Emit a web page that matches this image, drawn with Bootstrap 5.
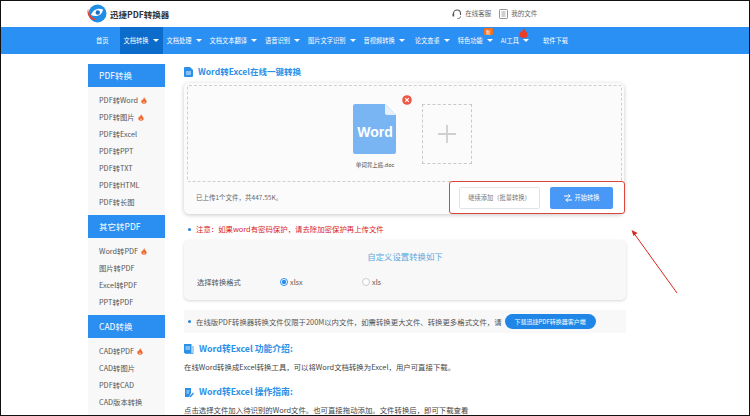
<!DOCTYPE html>
<html lang="zh-CN">
<head>
<meta charset="utf-8">
<title>Word转Excel</title>
<link href="https://cdn.jsdelivr.net/npm/bootstrap@5.3.0/dist/css/bootstrap.min.css" rel="stylesheet">
<style>
html,body{margin:0;background:#fff;overflow:hidden}
body{font-family:"Noto Sans CJK SC","Noto Sans",sans-serif;color:#444}
.frame{width:750px;height:416px;border:1px solid #111;overflow:hidden;position:relative;background:#fff}
.tophead{height:26px;padding-left:86px}
.brand{font-size:8.5px;font-weight:700;color:#333;margin-left:3px;line-height:1}
.tools{margin-left:283px;font-size:6.5px;color:#666}
.tools span{margin-left:3px}
.tools svg{display:block}
.tool-b{margin-left:8px}
.bluebar{height:27px;background:#2b90f3;padding-left:91px;color:#fff;font-size:6.25px}
.navi{height:27px;padding:0 4px;white-space:nowrap;position:relative}
.navi.on{background:#0b6ccb;margin-left:7px}
.navi.wide{padding-right:6px}
.navi.last{margin-left:6px}
.caret-w{width:0;height:0;border-left:3.2px solid transparent;border-right:3.2px solid transparent;border-top:3.6px solid #fff;margin-left:4px}
.badge-new{position:absolute;left:30px;top:1px;width:9px;height:7px;background:#f2701f;font-size:5px;line-height:7px;text-align:center;border-radius:1px}
.flame-top{position:absolute;left:22px;top:1px}
.pagewrap{padding:10px 0 0 87px}
.sidebox{width:77px;flex:none}
.sidehead{height:23px;background:#2b8ff2;color:#fff;font-size:8.5px;padding-left:11px}
.sidelist{background:#f8f8f8;padding:4.5px 0 4.5px 11px;font-size:7.3px;color:#555}
.sideitem{height:17px}
.sideitem svg{margin-left:3px}
.mainbox{width:442px;margin-left:19px}
.headline{height:19px;color:#2b90e8;font-size:8.5px;font-weight:700;padding-bottom:4px}
.headline svg{margin-right:5px;flex:none}
.upcard{width:440px;height:131px;background:#fbfbfb;border-radius:5px;box-shadow:0 1px 4px rgba(0,0,0,.22);padding:2px 2px 0 3px;position:relative}
.dropzone{height:97px;border:1px dashed #cfcfcf;border-radius:2px;padding-top:18px;padding-left:165px}
.docwrap{width:44px;position:relative}
.delmark{left:49px;top:-9px}
.fname{font-size:5.5px;color:#444;text-align:center;white-space:nowrap;margin-top:7px;margin-left:-10px;width:64px}
.addbox{width:50px;height:60px;border:1px dashed #c9c9c9;margin-left:25px}
.upfoot{height:32px;padding-left:9px;font-size:6.5px;color:#666}
.redbox{width:176px;height:33px;border:1px solid #d9473c;border-radius:3px;background:#fff;margin-left:auto;margin-right:-3px;padding:0 11px 0 9px;margin-top:-1px}
.btn-add,.btn-go{height:22px;border-radius:2px;font-size:6.25px;padding:0}
.btn-add{width:81px;background:#fff;border:1px solid #e3e3e3;color:#777}
.btn-go{width:63px;background:#4a98f5;border:0;color:#fff;margin-left:auto}
.btn-go svg{margin-right:3px}
.noteline{height:26px;font-size:7.4px;color:#d8222b;padding-left:4px;margin-top:2px}
.dotmark{width:3px;height:3px;border-radius:50%;background:#1d86e0;margin-right:5px;flex:none}
.setcard{width:442px;height:60px;background:#f8f8f8;border-radius:5px;box-shadow:0 1px 3px rgba(0,0,0,.16);margin-top:-2px}
.settitle{color:#5aa8dc;font-size:8.4px;text-align:center;padding-top:9px;height:28px;line-height:14px}
.setrow{height:28px;font-size:7.3px;color:#555;padding-left:13px}
.setlabel{width:83px}
.radio-mark{width:8px;height:8px;border-radius:50%;border:1px solid #ccc;background:#fff;margin-right:2px;flex:none}
.radio-mark.sel{border-color:#2b8ff2;background:radial-gradient(circle,#2b8ff2 0 2px,#fff 2.3px)}
.radio-w{width:82px}
.stripbar{height:23px;width:442px;background:#f8f8f8;margin-top:10px;font-size:7.4px;color:#555;padding-left:4px;white-space:nowrap}
.pillbtn{width:91px;height:15px;background:#1f86e8;color:#fff;border-radius:8px;font-size:6px;border:0;padding:0;margin-left:3px;white-space:nowrap}
.subhead{height:16px;color:#2b90e8;font-size:8.8px;font-weight:700;white-space:nowrap}
.subhead svg{margin-right:5px;flex:none}
.paraline{font-size:7.4px;color:#444;white-space:nowrap;line-height:12px}
.s1{margin-top:8px}.p1{margin-top:4px}.s2{margin-top:11px}.p2{margin-top:4px}
.arrowover{position:absolute;left:620px;top:220px}
</style>
</head>
<body>
<div class="frame">
  <header class="tophead d-flex align-items-center">
    <svg width="20" height="20" viewBox="0 0 20 20"><circle cx="10.500" cy="9.500" r="9" fill="#1f8fe6"/><path d="M4 11C6 5.500 11 3.500 16 5.500C15.500 10.500 10 14 4 11Z" fill="#fff"/><circle cx="10.800" cy="8.500" r="2.200" fill="#1f6fc4"/><path d="M1.200 4.500C1 9.500 4 13 9.500 15.500C7 17 2.500 15 1 11C.3 9 .4 6.500 1.200 4.500Z" fill="#e8402f"/></svg>
    <span class="brand">迅捷PDF转换器</span>
    <div class="tools d-flex align-items-center">
      <svg width="10" height="11" viewBox="0 0 10 11"><path d="M1.500 6V4.500A3.500 3.500 0 0 1 8.500 4.500V6" fill="none" stroke="#555" stroke-width="1.100"/><rect x=".5" y="4.500" width="1.700" height="3" rx=".6" fill="#555"/><path d="M8.500 7.500C8.500 9 7 9.500 5.500 9.500" fill="none" stroke="#555" stroke-width=".9"/></svg>
      <span>在线客服</span>
      <svg class="tool-b" width="9" height="10" viewBox="0 0 9 10"><rect x=".5" y=".5" width="8" height="9" rx="1" fill="none" stroke="#777" stroke-width=".8"/><path d="M2.500 3H6.500M2.500 5H6.500M2.500 7H6.500" stroke="#777" stroke-width=".7"/></svg>
      <span>我的文件</span>
    </div>
  </header>
  <nav class="bluebar d-flex align-items-center">
    <div class="navi d-flex align-items-center">首页</div>
    <div class="navi on d-flex align-items-center"><span>文档转换</span><i class="caret-w"></i></div>
    <div class="navi d-flex align-items-center"><span>文档处理</span><i class="caret-w"></i></div>
    <div class="navi d-flex align-items-center"><span>文档文本翻译</span><i class="caret-w"></i></div>
    <div class="navi d-flex align-items-center"><span>语音识别</span><i class="caret-w"></i></div>
    <div class="navi d-flex align-items-center"><span>图片文字识别</span><i class="caret-w"></i></div>
    <div class="navi wide d-flex align-items-center"><span>音视频转换</span><i class="caret-w"></i></div>
    <div class="navi d-flex align-items-center"><span>论文查重</span><i class="caret-w"></i></div>
    <div class="navi d-flex align-items-center"><span>特色功能</span><i class="caret-w"></i><b class="badge-new fw-normal">新</b></div>
    <div class="navi d-flex align-items-center"><span>AI工具</span><i class="caret-w"></i>
      <svg class="flame-top" width="9" height="10" viewBox="0 0 9 10"><path d="M5 0C5.300 2.500 8.500 3.800 8.500 7C8.500 8.800 7 10 4.500 10C2 10 .5 8.800 .5 7C.5 5.300 1.300 4.200 2 3.200C2.300 4 2.600 4.500 3.200 4.900C3 3 3.600 1.300 5 0Z" fill="#ee3b22"/></svg>
    </div>
    <div class="navi last d-flex align-items-center">软件下载</div>
  </nav>
  <div class="pagewrap d-flex">
    <aside class="sidebox">
      <div class="sidehead d-flex align-items-center">PDF转换</div>
      <div class="sidelist">
        <div class="sideitem d-flex align-items-center">PDF转Word<svg width="6" height="7" viewBox="0 0 9 10"><path d="M5 0C5.300 2.500 8.500 3.800 8.500 7C8.500 8.800 7 10 4.500 10C2 10 .5 8.800 .5 7C.5 5.300 1.300 4.200 2 3.200C2.300 4 2.600 4.500 3.200 4.900C3 3 3.600 1.300 5 0Z M4.500 6C3.500 7 3.300 8.800 4.500 8.800C5.700 8.800 5.500 7 4.500 6Z" fill="#f0662a" fill-rule="evenodd"/></svg></div>
        <div class="sideitem d-flex align-items-center">PDF转图片<svg width="6" height="7" viewBox="0 0 9 10"><path d="M5 0C5.300 2.500 8.500 3.800 8.500 7C8.500 8.800 7 10 4.500 10C2 10 .5 8.800 .5 7C.5 5.300 1.300 4.200 2 3.200C2.300 4 2.600 4.500 3.200 4.900C3 3 3.600 1.300 5 0Z M4.500 6C3.500 7 3.300 8.800 4.500 8.800C5.700 8.800 5.500 7 4.500 6Z" fill="#f0662a" fill-rule="evenodd"/></svg></div>
        <div class="sideitem d-flex align-items-center">PDF转Excel</div>
        <div class="sideitem d-flex align-items-center">PDF转PPT</div>
        <div class="sideitem d-flex align-items-center">PDF转TXT</div>
        <div class="sideitem d-flex align-items-center">PDF转HTML</div>
        <div class="sideitem d-flex align-items-center">PDF转长图</div>
      </div>
      <div class="sidehead d-flex align-items-center">其它转PDF</div>
      <div class="sidelist">
        <div class="sideitem d-flex align-items-center">Word转PDF<svg width="6" height="7" viewBox="0 0 9 10"><path d="M5 0C5.300 2.500 8.500 3.800 8.500 7C8.500 8.800 7 10 4.500 10C2 10 .5 8.800 .5 7C.5 5.300 1.300 4.200 2 3.200C2.300 4 2.600 4.500 3.200 4.900C3 3 3.600 1.300 5 0Z M4.500 6C3.500 7 3.300 8.800 4.500 8.800C5.700 8.800 5.500 7 4.500 6Z" fill="#f0662a" fill-rule="evenodd"/></svg></div>
        <div class="sideitem d-flex align-items-center">图片转PDF</div>
        <div class="sideitem d-flex align-items-center">Excel转PDF</div>
        <div class="sideitem d-flex align-items-center">PPT转PDF</div>
      </div>
      <div class="sidehead d-flex align-items-center">CAD转换</div>
      <div class="sidelist">
        <div class="sideitem d-flex align-items-center">CAD转PDF<svg width="6" height="7" viewBox="0 0 9 10"><path d="M5 0C5.300 2.500 8.500 3.800 8.500 7C8.500 8.800 7 10 4.500 10C2 10 .5 8.800 .5 7C.5 5.300 1.300 4.200 2 3.200C2.300 4 2.600 4.500 3.200 4.900C3 3 3.600 1.300 5 0Z M4.500 6C3.500 7 3.300 8.800 4.500 8.800C5.700 8.800 5.500 7 4.500 6Z" fill="#f0662a" fill-rule="evenodd"/></svg></div>
        <div class="sideitem d-flex align-items-center">CAD转图片</div>
        <div class="sideitem d-flex align-items-center">PDF转CAD</div>
        <div class="sideitem d-flex align-items-center">CAD版本转换</div>
      </div>
    </aside>
    <main class="mainbox">
      <div class="headline d-flex align-items-center">
        <svg width="9" height="10" viewBox="0 0 9 10"><path d="M1 0H6L9 3V9A1 1 0 0 1 8 10H1A1 1 0 0 1 0 9V1A1 1 0 0 1 1 0Z" fill="#2b90e8"/><path d="M2 5H7M2 7H7" stroke="#fff" stroke-width=".9"/></svg>
        Word转Excel在线一键转换
      </div>
      <section class="upcard">
        <div class="dropzone d-flex">
          <div class="docwrap">
            <svg width="44" height="50" viewBox="0 0 44 50"><path d="M2 0H32L43 11V48A2 2 0 0 1 41 50H2A2 2 0 0 1 0 48V2A2 2 0 0 1 2 0Z" fill="#7ab5f3"/><path d="M32 0L43 11H34A2 2 0 0 1 32 9Z" fill="#e6f1fd"/><text x="22" y="33" text-anchor="middle" font-family="Liberation Sans,sans-serif" font-weight="700" font-size="14" fill="#fff">Word</text></svg>
            <div class="fname">单词背上癌.doc</div>
            <svg class="delmark position-absolute" width="10" height="10" viewBox="0 0 10 10"><circle cx="5" cy="5" r="4.800" fill="#ec5a47"/><path d="M3.200 3.200L6.800 6.800M6.800 3.200L3.200 6.800" stroke="#fff" stroke-width="1.100"/></svg>
          </div>
          <div class="addbox d-flex align-items-center justify-content-center">
            <svg width="20" height="20" viewBox="0 0 20 20"><path d="M10 1V19M1 10H19" stroke="#cfcfcf" stroke-width="1.800"/></svg>
          </div>
        </div>
        <div class="upfoot d-flex align-items-center">
          <span>已上传1个文件，共447.55K。</span>
          <div class="redbox d-flex align-items-center">
            <button class="btn btn-add" type="button">继续添加（批量转换）</button>
            <button class="btn btn-go d-flex align-items-center justify-content-center" type="button">
              <svg width="8" height="8" viewBox="0 0 8 8"><path d="M0 2H6M4.200 .4L6.200 2L4.200 3.600" fill="none" stroke="#fff" stroke-width="1"/><path d="M8 6H2M3.800 4.400L1.800 6L3.800 7.600" fill="none" stroke="#fff" stroke-width="1"/></svg>开始转换
            </button>
          </div>
        </div>
      </section>
      <div class="noteline d-flex align-items-center"><i class="dotmark"></i>注意：如果word有密码保护，请去除加密保护再上传文件</div>
      <section class="setcard">
        <div class="settitle">自定义设置转换如下</div>
        <div class="setrow d-flex align-items-center">
          <span class="setlabel">选择转换格式</span>
          <label class="radio-w d-flex align-items-center"><i class="radio-mark sel"></i>xlsx</label>
          <label class="radio-w d-flex align-items-center"><i class="radio-mark"></i>xls</label>
        </div>
      </section>
      <div class="stripbar d-flex align-items-center"><i class="dotmark"></i>在线版PDF转换器转换文件仅限于200M以内文件，如需转换更大文件、转换更多格式文件，请<button class="pillbtn" type="button">下载迅捷PDF转换器客户端</button></div>
      <div class="subhead s1 d-flex align-items-center">
        <svg width="10" height="10" viewBox="0 0 10 10"><rect x="0" y="0" width="7.500" height="9" fill="#2b90e8"/><path d="M1.500 3H6M1.500 5H6" stroke="#fff" stroke-width=".8"/><path d="M9 2V9.500H1" fill="none" stroke="#2b90e8" stroke-width=".8"/></svg><span>Word转Excel 功能介绍:</span>
      </div>
      <p class="paraline p1 mb-0">在线Word转换成Excel转换工具，可以将Word文档转换为Excel，用户可直接下载。</p>
      <div class="subhead s2 d-flex align-items-center">
        <svg width="10" height="11" viewBox="0 0 10 11"><path d="M1 1H7V6L5 10H1Z" fill="#2b90e8"/><path d="M2.500 4H5.500M2.500 6H5" stroke="#fff" stroke-width=".8"/><path d="M6 10L9.500 6" stroke="#2b90e8" stroke-width="1.300"/></svg><span>Word转Excel 操作指南:</span>
      </div>
      <p class="paraline p2 mb-0">点击选择文件加入待识别的Word文件。也可直接拖动添加。文件转换后，即可下载查看</p>
    </main>
  </div>
  <svg class="arrowover" width="65" height="80" viewBox="0 0 65 80"><path d="M56 72L12 11" stroke="#d9281e" stroke-width="1"/><path d="M10.500 9L16.500 12L12.500 15Z" fill="#d9281e"/></svg>
</div>
<script src="https://cdn.jsdelivr.net/npm/bootstrap@5.3.0/dist/js/bootstrap.bundle.min.js"></script>
</body>
</html>
